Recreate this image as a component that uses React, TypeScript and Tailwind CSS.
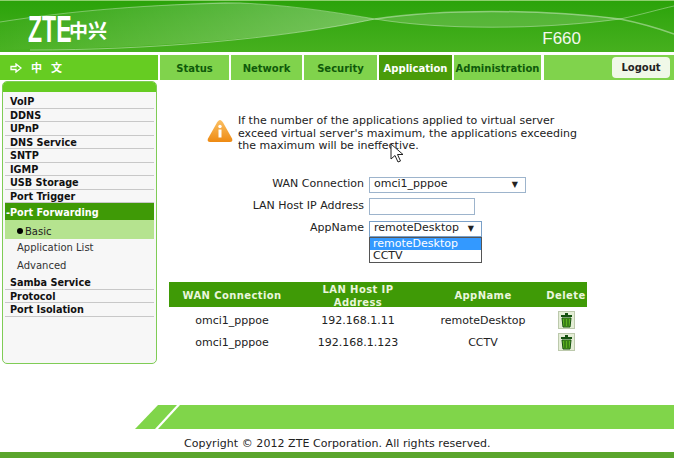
const menuTop = ["VoIP", "DDNS", "UPnP", "DNS Service", "SNTP", "IGMP", "USB Storage", "Port Trigger"];
const menuBottom = ["Samba Service", "Protocol", "Port Isolation"];
const tabs = [
  { name: "Status", w: "w-[69px]" },
  { name: "Network", w: "w-[71px]" },
  { name: "Security", w: "w-[73px]" },
  { name: "Application", w: "w-[73px]", active: true },
  { name: "Administration", w: "w-[87px]" },
];
const rows = [
  { ip: "192.168.1.11", app: "remoteDesktop" },
  { ip: "192.168.1.123", app: "CCTV" },
];

function HeaderWaves() {
  return (
    <svg width="674" height="52" viewBox="0 0 674 52" className="absolute left-0 top-0">
      <defs>
        <linearGradient id="sweep" x1="0" y1="0" x2="1" y2="0">
          <stop offset="0" stopColor="#fff" stopOpacity="0.02" />
          <stop offset="0.75" stopColor="#fff" stopOpacity="0.24" />
          <stop offset="1" stopColor="#fff" stopOpacity="0.3" />
        </linearGradient>
      </defs>
      <path d="M0 49C130 48 270 40 375 18 320 9 270 3 225 1 140 4 60 12 0 21z" fill="url(#sweep)" />
      <path d="M375 18C440 8 540 8 620 18 540 29 440 29 375 18z" fill="#fff" opacity="0.16" />
      <path d="M0 21C70 10 150 3 240 2 290 4 340 12 375 18 440 29 540 29 620 18 640 14 660 8 674 5" fill="none" stroke="#fff" strokeOpacity="0.35" />
      <path d="M375 18C440 8 540 8 620 18 640 22 660 28 674 33" fill="none" stroke="#fff" strokeOpacity="0.4" strokeWidth="1.500" />
      <path d="M30 49C150 49 280 38 375 18" fill="none" stroke="#fff" strokeOpacity="0.4" />
    </svg>
  );
}

function TrashIcon() {
  return (
    <svg width="17" height="18" viewBox="0 0 17 18">
      <rect x="0.5" y="0.5" width="16" height="17" fill="#e4edd6" stroke="#bcc9ac" />
      <rect x="7" y="2" width="3" height="2" fill="#14500f" />
      <rect x="3" y="4" width="11" height="2" fill="#14500f" />
      <path d="M4 7h9l-1 9H5z" fill="#5cb01e" stroke="#14500f" />
      <path d="M7 8v7M10 8v7" stroke="#14500f" />
    </svg>
  );
}

function WarningIcon() {
  return (
    <svg width="26" height="24" viewBox="0 0 26 24">
      <defs>
        <linearGradient id="warn" x1="0" y1="0" x2="0" y2="1">
          <stop offset="0" stopColor="#fbc064" />
          <stop offset="1" stopColor="#ee8a12" />
        </linearGradient>
      </defs>
      <path d="M13 1c1 0 2 1 3 2.500l9 16c1 2 0 3.500-2 3.500H3c-2 0-3-1.500-2-3.500l9-16C11 2 12 1 13 1z" fill="url(#warn)" />
      <circle cx="13" cy="7.500" r="1.700" fill="#fff" />
      <rect x="11.500" y="10.500" width="3" height="8" fill="#fff" />
    </svg>
  );
}

function Cursor() {
  return (
    <svg width="14" height="20" viewBox="0 0 14 20" className="absolute left-[390px] top-[143px]">
      <path d="M1 1v15l4-3.500 3 6.500 2.500-1-3-6.500h5.500z" fill="#fff" stroke="#222" strokeWidth="1" />
    </svg>
  );
}

export default function App() {
  return (
    <div className="relative flex h-[458px] w-[674px] flex-col overflow-hidden bg-white font-['DejaVu_Sans',sans-serif] text-[11px] text-[#222]">
      <header className="relative flex h-[52px] shrink-0 items-start justify-between overflow-hidden border-t border-[#8fcf70] bg-gradient-to-b from-[#2ba30a] to-[#46b01e] pl-[28px] pr-[93px]">
        <HeaderWaves />
        <div className="relative mt-[15px] flex items-center text-white">
          <span className="w-[41px] origin-left scale-x-[0.64] font-['Liberation_Sans',sans-serif] text-[36px] leading-[27px] font-bold">ZTE</span>
          <span className="font-['Noto_Sans_CJK_SC',sans-serif] text-[19px] leading-[27px] font-bold">中兴</span>
        </div>
        <span className="relative mt-[28px] font-['Liberation_Sans',sans-serif] text-[17px] leading-[20px] text-[#f4f8ee]">F660</span>
      </header>

      <nav className="mt-[3px] flex h-[25px] shrink-0 text-[10px] font-bold">
        <div className="flex w-[158px] items-center gap-[9px] bg-[#66cc22] pl-[10px] text-[11px] text-white">
          <svg width="12" height="10" viewBox="0 0 12 10">
            <path d="M1 3.500h5V1l5 4-5 4V6.500H1z" fill="none" stroke="#fff" strokeWidth="1.300" />
          </svg>
          <span className="font-['Noto_Sans_CJK_SC',sans-serif] tracking-[9px]">中文</span>
        </div>
        <div className="ml-[2px] flex gap-[2px]">
          {tabs.map((t) => (
            <div
              key={t.name}
              className={`${t.w} pt-[1px] text-center leading-[25px] ${t.active ? "bg-[#4a9c0a] text-white" : "bg-[#80d34c] text-[#0f5a0a]"}`}
            >
              {t.name}
            </div>
          ))}
        </div>
        <div className="ml-[3px] flex flex-1 items-center justify-end bg-[#80d34c] pr-[4px]">
          <div className="flex h-[21px] w-[58px] items-center justify-center rounded-[4px] bg-[#f0f8e8] text-[#222]">Logout</div>
        </div>
      </nav>

      <div className="flex flex-1">
        <aside className="ml-[2px] mt-[1px] h-[283px] w-[155px] shrink-0 rounded-[5px] border border-[#7fcc55] bg-[#f7f7f7]">
          <div className="h-[10px] rounded-t-[4px] bg-[#66cc22]" />
          <div className="mx-[2px] pt-[3px] text-[9.700px] font-bold text-[#111]">
            {menuTop.map((m) => (
              <div key={m} className="h-[13.500px] border-b border-[#c8c8c8] pl-[5px] leading-[13px]">{m}</div>
            ))}
            <div className="h-[17px] bg-[#3f9a06] pl-[1px] leading-[19px] text-white">-Port Forwarding</div>
            <div className="flex h-[19px] items-center bg-[#b5e38f] pl-[12px] pt-[3px] font-normal text-[10px] text-[#222]">
              <span className="mr-[2px] size-[6px] rounded-full bg-black" />
              Basic
            </div>
            <div className="h-[18px] pl-[12px] font-normal text-[10px] leading-[18px] text-[#333]">Application List</div>
            <div className="h-[19px] pl-[12px] font-normal text-[10px] leading-[18px] text-[#333]">Advanced</div>
            {menuBottom.map((m) => (
              <div key={m} className="h-[13.500px] border-b border-[#c8c8c8] pl-[5px] leading-[13px]">{m}</div>
            ))}
          </div>
        </aside>

        <main className="relative ml-[3px] flex-1">
          <div className="ml-[47px] mt-[35px] flex gap-[5px]">
            <div className="mt-[4px]"><WarningIcon /></div>
            <p className="w-[345px] text-[11px] leading-[12.500px]">
              If the number of the applications applied to virtual server exceed virtual server's maximum, the applications exceeding the maximum will be ineffective.
            </p>
          </div>

          <div className="mt-[24px] flex flex-col gap-[5px]">
            <div className="flex h-[16px] items-center">
              <label className="w-[205px] pr-[1px] text-right">WAN Connection</label>
              <div className="ml-[4px] flex h-[16px] w-[157px] items-center justify-between border border-[#9db4cc] pl-[4px] pr-[7px]">
                omci1_pppoe<span className="text-[8px]">▼</span>
              </div>
            </div>
            <div className="flex h-[17px] items-center">
              <label className="w-[205px] pr-[1px] text-right">LAN Host IP Address</label>
              <div className="ml-[4px] h-[17px] w-[106px] border border-[#9db4cc]" />
            </div>
            <div className="relative mt-[1px] flex h-[16px] items-center">
              <label className="w-[205px] pr-[1px] text-right">AppName</label>
              <div className="ml-[4px] flex h-[16px] w-[113px] items-center justify-between border border-[#7aa0c8] pl-[4px] pr-[7px]">
                remoteDesktop<span className="text-[8px]">▼</span>
              </div>
              <div className="absolute left-[209px] top-[16px] w-[113px] border border-[#555] bg-white">
                <div className="h-[12px] bg-[#3399ff] pl-[3px] leading-[12px] text-white">remoteDesktop</div>
                <div className="h-[12px] pl-[3px] leading-[12px]">CCTV</div>
              </div>
            </div>
          </div>

          <div className="ml-[9px] mt-[45px] w-[418px]">
            <div className="mb-[4px] grid h-[25px] grid-cols-[126px_126px_124px_42px] items-center bg-[#3f9a06] pt-[1px] text-center text-[10px] font-bold leading-[13px] tracking-[0.4px] text-[#eaf6dd]">
              <span>WAN Connection</span>
              <span>LAN Host IP<br />Address</span>
              <span>AppName</span>
              <span className="whitespace-nowrap">Delete</span>
            </div>
            {rows.map((r) => (
              <div key={r.ip} className="grid h-[22px] grid-cols-[126px_126px_124px_42px] items-center text-center">
                <span>omci1_pppoe</span>
                <span>{r.ip}</span>
                <span>{r.app}</span>
                <span className="-mt-[3px] flex justify-center"><TrashIcon /></span>
              </div>
            ))}
          </div>
        </main>
      </div>

      <div className="ml-[135px] flex h-[24px] shrink-0">
        <div className="w-[42px] shrink-0 bg-[#80d54a] [clip-path:polygon(23px_0,42px_0,20px_100%,0_100%)]" />
        <div className="-ml-[19px] flex-1 bg-[#80d54a] [clip-path:polygon(22px_0,100%_0,100%_100%,0_100%)]" />
      </div>
      <div className="flex h-[23px] shrink-0 items-center pl-[184px] pt-[7px] tracking-[0.05px]">Copyright © 2012 ZTE Corporation. All rights reserved.</div>
      <div className="h-[6px] shrink-0 bg-[#5aa52c]" />
      <Cursor />
    </div>
  );
}
